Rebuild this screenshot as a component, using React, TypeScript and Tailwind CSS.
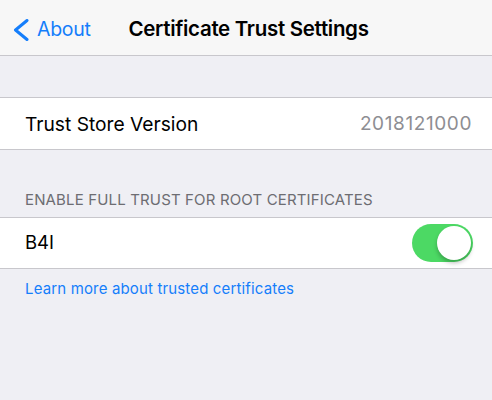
const font = { fontFamily: "Inter, 'Noto Sans', sans-serif" };

function BackChevron() {
  return (
    <svg width="17" height="22" viewBox="0 0 17 22" fill="none" stroke="currentColor" strokeWidth="3" strokeLinecap="round" strokeLinejoin="round">
      <polyline points="14,1.5 2.5,11 14,20.5" />
    </svg>
  );
}

export default function App() {
  return (
    <div className="flex h-[400px] w-[492px] flex-col bg-[#efeff4]" style={font}>
      {/* nav bar */}
      <div className="relative flex h-[56px] items-center justify-center border-b border-[#c8c7cc] bg-[#f7f7f7] pt-[4px]">
        <div className="absolute left-[13px] top-0 flex h-full items-center gap-[7px] pt-[4px] text-[#157efb]">
          <BackChevron />
          <span className="text-[19.5px] tracking-[-0.3px]">About</span>
        </div>
        <span className="pl-[5px] text-[20.5px] font-semibold tracking-[-0.3px] text-black">
          Certificate Trust Settings
        </span>
      </div>

      <div className="h-[41px]" />

      <div className="flex h-[53px] items-center justify-between border-y border-[#c8c7cc] bg-white pl-[25px] pr-[20px] pt-[1px]">
        <span className="text-[19.2px] text-black">Trust Store Version</span>
        <span className="text-[19px] tracking-[0.6px] text-[#8e8e93]">2018121000</span>
      </div>

      <div className="flex h-[67px] items-end pb-[6px] pl-[25px]">
        <span className="text-[15px] tracking-[0.15px] text-[#6d6d72]">
          ENABLE FULL TRUST FOR ROOT CERTIFICATES
        </span>
      </div>

      <div className="flex h-[52px] items-center justify-between border-y border-[#c8c7cc] bg-white pl-[25px] pr-[19px]">
        <span className="text-[18.5px] text-black">B4I</span>
        <div className="flex h-[38px] w-[61px] items-center justify-end rounded-full bg-[#4cd964] p-[2px]">
          <div className="h-[34px] w-[34px] rounded-full bg-white shadow-[0_3px_4px_rgba(0,0,0,0.25)]" />
        </div>
      </div>

      <div className="pl-[25px] pt-[7px]">
        <span className="text-[15px] tracking-[0.15px] text-[#157efb]">Learn more about trusted certificates</span>
      </div>
    </div>
  );
}
